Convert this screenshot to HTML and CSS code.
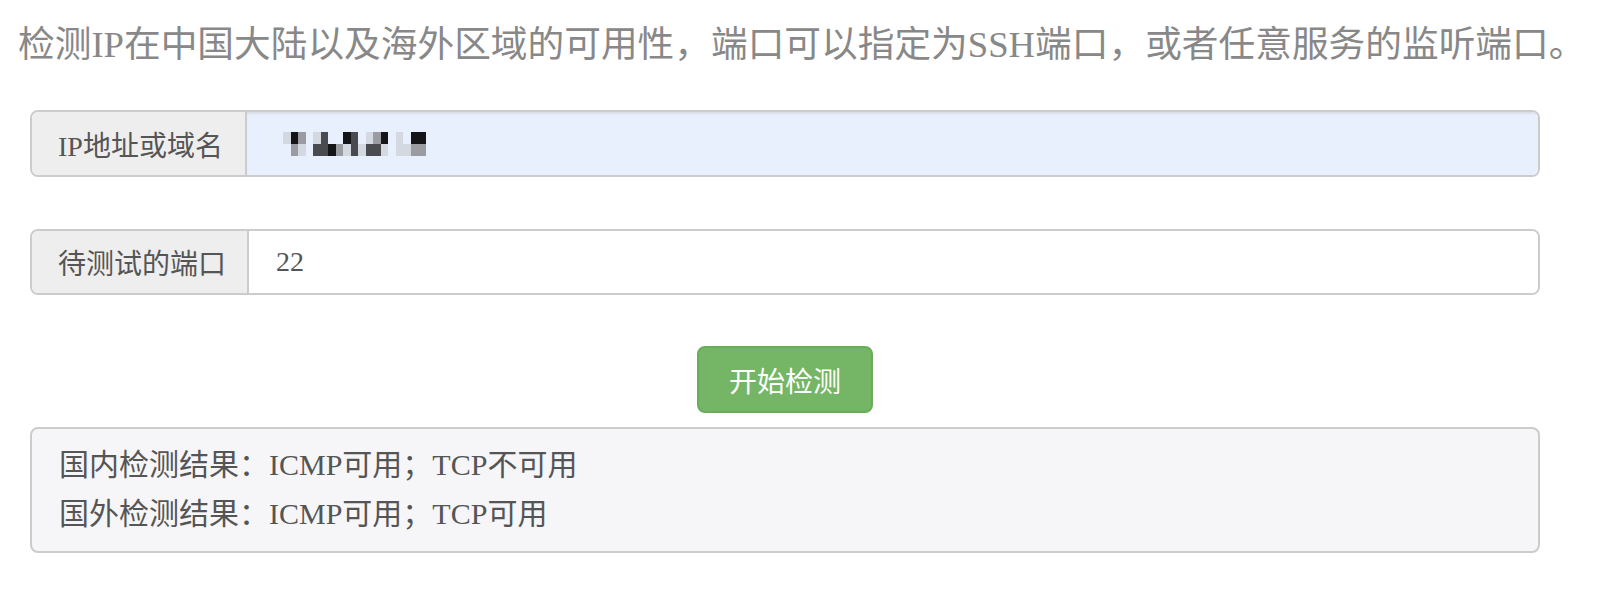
FILE: index.html
```html
<!DOCTYPE html>
<html lang="zh-CN">
<head>
<meta charset="utf-8">
<title>IP检测</title>
<link rel="stylesheet" href="styles.css">
</head>
<body>
<div class="page">
  <p class="lead">检测IP在中国大陆以及海外区域的可用性，端口可以指定为SSH端口，或者任意服务的监听端口。</p>
  <form class="form">
    <div class="group">
      <span class="addon">IP地址或域名</span>
      <div class="field autofill">
        <span class="pix">
          <i class="c1"></i><i class="c4"></i><i class="c2"></i><i></i><i class="c1"></i><i class="c3"></i><i></i><i></i><i class="c4"></i><i class="c3"></i><i></i><i class="c1"></i><i class="c2"></i><i class="c4"></i><i></i><i class="c1"></i><i></i><i class="c4"></i><i class="c4"></i><i></i>
          <i></i><i class="c2"></i><i class="c1"></i><i></i><i class="c3"></i><i class="c3"></i><i class="c4"></i><i class="c2"></i><i class="c1"></i><i class="c3"></i><i class="c1"></i><i class="c3"></i><i class="c3"></i><i class="c1"></i><i></i><i class="c1"></i><i class="c1"></i><i class="c2"></i><i class="c2"></i><i></i>
        </span>
      </div>
    </div>
    <div class="group group-port">
      <span class="addon addon-wide">待测试的端口</span>
      <div class="field">22</div>
    </div>
    <div class="actions">
      <button type="button" class="btn">开始检测</button>
    </div>
    <div class="result">
      <p>国内检测结果：ICMP可用；TCP不可用</p>
      <p>国外检测结果：ICMP可用；TCP可用</p>
    </div>
  </form>
</div>
</body>
</html>
```
FILE: styles.css
```css
* { box-sizing: border-box; }
html, body {
  margin: 0;
  background: #fff;
}
body {
  font-family: "Liberation Serif", "Noto Sans CJK SC", serif;
  color: #555;
}
.page {
  padding-top: 20px;
}
.lead {
  margin: 0 0 40px 0;
  padding-left: 18px;
  font-size: 36.7px;
  line-height: 50px;
  color: #888;
  white-space: nowrap;
}
.form {
  display: flex;
  flex-direction: column;
  padding: 0 60px 0 30px;
}
.group {
  display: flex;
  height: 67px;
  border: 2px solid #ccc;
  border-radius: 8px;
  overflow: hidden;
  margin-bottom: 52px;
}
.group-port {
  height: 66px;
  margin-bottom: 51px;
}
.addon {
  display: flex;
  align-items: center;
  width: 215px;
  padding: 0 0 0 26px;
  background: #eee;
  border-right: 2px solid #ccc;
  font-size: 28px;
  color: #555;
  white-space: nowrap;
}
.addon-wide {
  width: 217px;
}
.field {
  flex: 1;
  display: flex;
  align-items: center;
  padding-left: 27px;
  font-size: 28px;
  color: #555;
  background: #fff;
}
.autofill {
  background: #e8f0fe;
  box-shadow: inset 0 3px 2px -1px #d9dde4;
}
.pix {
  display: grid;
  grid-template-columns: repeat(20, 7.5px);
  grid-template-rows: repeat(2, 12px);
  margin-left: 9px;
}
.pix i { display: block; }
.pix .c1 { background: #d4d8e0; }
.pix .c2 { background: #9a9ca2; }
.pix .c3 { background: #4a4b50; }
.pix .c4 { background: #151518; }
.actions {
  display: flex;
  justify-content: center;
  margin-bottom: 14px;
}
.btn {
  width: 176px;
  height: 67px;
  border: 2px solid #69ad5b;
  border-radius: 8px;
  background: #74b666;
  color: #fff;
  font-family: "Liberation Serif", "Noto Sans CJK SC", serif;
  font-size: 28px;
  padding: 0;
  cursor: pointer;
}
.result {
  border: 2px solid #ccc;
  border-radius: 8px;
  background: #f6f6f8;
  padding: 11px 27px 13px;
}
.result p {
  margin: 0;
  font-size: 30px;
  line-height: 49px;
  color: #555;
}
```
